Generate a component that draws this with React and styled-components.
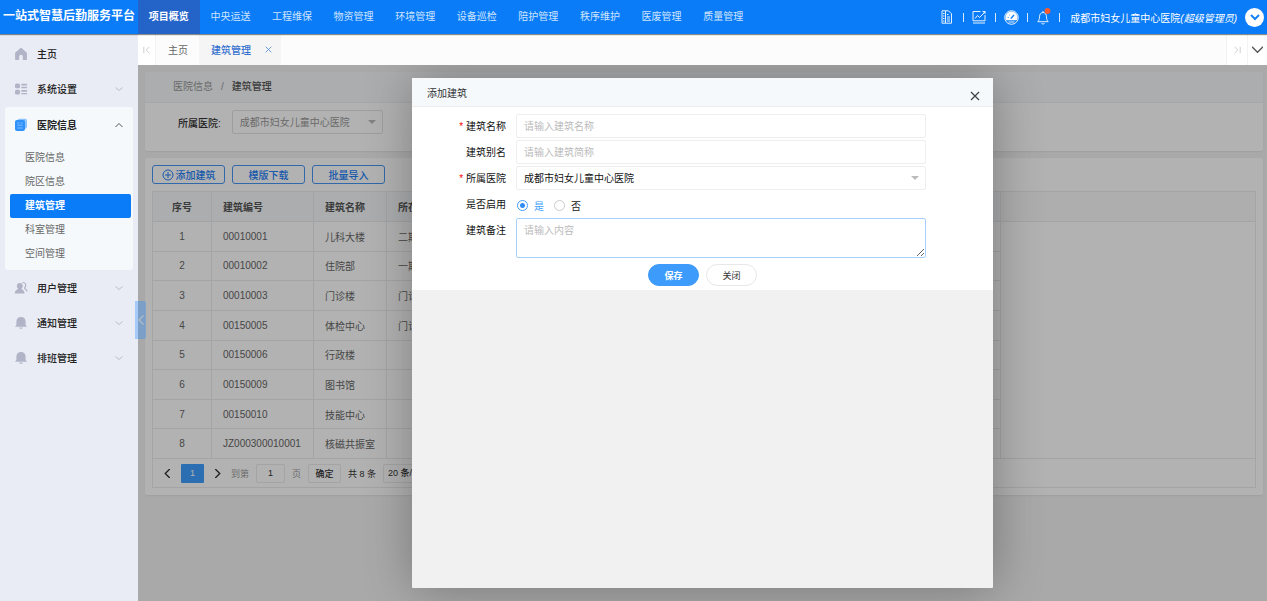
import React, { useState } from "react";
import styled, { createGlobalStyle, css } from "styled-components";

const GlobalStyle = createGlobalStyle`
  * {
    box-sizing: border-box;
  }
  body {
    margin: 0;
    overflow: hidden;
    background: #f2f2f2;
  }
  body,
  button,
  input,
  select,
  textarea {
    font-family: "Liberation Sans", "Noto Sans CJK SC", sans-serif;
    font-size: 10px;
    color: #333;
  }
  button {
    padding: 0;
    border: 0;
    background: none;
    cursor: pointer;
  }
  a {
    color: inherit;
    text-decoration: none;
  }
`;

const Page = styled.div`
  display: flex;
  flex-direction: column;
  height: 100vh;
`;

/* ---------- header ---------- */
const Header = styled.header`
  position: relative;
  z-index: 3;
  display: flex;
  flex: none;
  height: 34px;
  background: #0a7cf8;
  color: #fff;
  box-shadow: 0 1px 1px rgba(0, 0, 0, 0.45);
`;
const Logo = styled.h1`
  flex: none;
  width: 138px;
  margin: 0;
  font-size: 12px;
  font-weight: 700;
  line-height: 33px;
  text-align: center;
  white-space: nowrap;
`;
const TopNav = styled.nav`
  display: flex;
  flex: 0 1 616px;
`;
const TopLink = styled.a`
  flex: 1;
  line-height: 34px;
  text-align: center;
  white-space: nowrap;
  color: ${(p) => (p.$active ? "#fff" : "#cfe4fd")};
  font-weight: ${(p) => (p.$active ? 700 : 400)};
  background: ${(p) => (p.$active ? "#2464c9" : "transparent")};
`;
const Tools = styled.div`
  display: flex;
  align-items: center;
  margin-left: auto;
  padding-right: 3px;
  white-space: nowrap;
`;
const Tool = styled.button`
  position: relative;
  display: flex;
  align-items: center;
  justify-content: center;
  width: 32px;
  height: 33px;
  padding-right: 2px;
  color: #e6f1fe;
  &::after {
    content: "";
    position: absolute;
    right: 0;
    width: 1px;
    height: 9px;
    background: #d5e8fe;
  }
`;
const UserName = styled.span`
  margin: 0 8px 0 10px;
`;
const UserToggle = styled.button`
  display: flex;
  align-items: center;
  justify-content: center;
  width: 19px;
  height: 19px;
  border-radius: 50%;
  background: #fff;
  color: #1682f8;
`;

/* ---------- sidebar ---------- */
const Body = styled.div`
  display: flex;
  flex: 1;
  min-height: 0;
`;
const Sidebar = styled.aside`
  flex: none;
  width: 138px;
  padding-top: 2px;
  background: #eaecf5;
`;
const MenuGroup = styled.div`
  ${(p) =>
    p.$open &&
    css`
      margin: 1px 5px 0;
      border-radius: 3px;
      background: #f5f9fc;
    `}
`;
const MenuTitle = styled.button`
  display: flex;
  align-items: center;
  width: 100%;
  height: 35px;
  padding: 0 ${(p) => (p.$open ? 10 : 15)}px 0 ${(p) => (p.$open ? 9 : 14)}px;
  color: #222;
  font-weight: ${(p) => (p.$open ? 700 : 500)};
  svg:first-child {
    margin-right: 9px;
  }
`;
const MenuArrow = styled.svg`
  width: 8px;
  height: 8px;
  margin-left: auto;
  color: ${(p) => (p.$open ? "#555" : "#bcbcc4")};
`;
const SubMenu = styled.div`
  display: flex;
  flex-direction: column;
  padding: 4px 2px 4px 5px;
`;
const SubLink = styled.a`
  padding-left: 15px;
  border-radius: 2px;
  line-height: 24px;
  color: ${(p) => (p.$active ? "#fff" : "#666")};
  font-weight: ${(p) => (p.$active ? 700 : 400)};
  background: ${(p) => (p.$active ? "#0a7cf8" : "transparent")};
`;

/* ---------- tabs ---------- */
const Main = styled.main`
  position: relative;
  display: flex;
  flex: 1;
  flex-direction: column;
  min-width: 0;
`;
const TabBar = styled.div`
  display: flex;
  flex: none;
  height: 31px;
  background: #fcfcfc;
`;
const TabIcon = styled.button`
  display: flex;
  align-items: center;
  justify-content: center;
  width: ${(p) => p.$width}px;
  border-right: 1px solid #f3f3f3;
  background: #fff;
  color: ${(p) => (p.$dark ? "#555" : "#c4c4c4")};
  &:last-child {
    border-right: 0;
  }
`;
const Tab = styled.div`
  display: flex;
  align-items: center;
  padding: 0 ${(p) => (p.$active ? 9 : 11)}px 0 12px;
  color: ${(p) => (p.$active ? "#3370cf" : "#666")};
  font-weight: ${(p) => (p.$active ? 500 : 400)};
  background: ${(p) => (p.$active ? "#f5f5f5" : "transparent")};
  button {
    display: flex;
    margin-left: 14px;
    color: #5a95dc;
  }
`;
const TabSpace = styled.div`
  flex: 1;
  border-right: 1px solid #f3f3f3;
`;

/* ---------- content ---------- */
const Content = styled.section`
  position: relative;
  flex: 1;
  min-height: 0;
  padding: 7px 4px 7px 7px;
  overflow: hidden;
  background: #f2f2f2;
`;
const Panel = styled.div`
  margin-bottom: 7px;
  border-radius: 2px;
  background: #fff;
  box-shadow: 0 1px 2px rgba(0, 0, 0, 0.06);
`;
const Breadcrumb = styled.nav`
  padding: 0 28px;
  border-bottom: 1px solid #f0f0f0;
  line-height: 30px;
  color: #999;
  background: #f5f8fb;
  span {
    margin: 0 8px;
  }
  b {
    color: #555;
    font-weight: 500;
  }
`;
const Filter = styled.div`
  display: flex;
  align-items: center;
  gap: 11px;
  padding: 7px 33px 17px;
  label {
    font-weight: 500;
  }
`;
const SelectBox = styled.div`
  position: relative;
  width: ${(p) => p.$width};
  &::after {
    content: "";
    position: absolute;
    top: 50%;
    right: 7px;
    margin-top: -2px;
    border: 4px solid transparent;
    border-top-color: #bbb;
    border-bottom: 0;
    pointer-events: none;
  }
`;
const fieldStyle = css`
  display: block;
  width: 100%;
  height: 24px;
  padding: 0 7px;
  border: 1px solid #eee;
  border-radius: 2px;
  outline: none;
  background: #fff;
  &::placeholder {
    color: #bbb;
  }
`;
const Select = styled.select`
  ${fieldStyle}
  appearance: none;
  color: ${(p) => (p.$muted ? "#999" : "#111")};
  border-color: ${(p) => (p.$muted ? "#e2e2e2" : "#eee")};
`;
const TablePanel = styled(Panel)`
  padding: 7px;
`;
const Toolbar = styled.div`
  display: flex;
  gap: 7px;
  margin-bottom: 7px;
`;
const ToolbarButton = styled.button`
  display: flex;
  align-items: center;
  justify-content: center;
  gap: 2px;
  width: 73px;
  height: 19px;
  border: 1px solid #4795f2;
  border-radius: 3px;
  color: #2280f6;
  font-weight: 500;
`;
const TableFrame = styled.div`
  border: 1px solid #ebebeb;
`;
const Table = styled.table`
  width: 100%;
  height: 267px;
  table-layout: fixed;
  border-collapse: separate;
  border-spacing: 0;
  color: #666;
  th,
  td {
    padding: 0 11px;
    border-right: 1px solid #ebebeb;
    border-bottom: 1px solid #ebebeb;
    text-align: left;
    white-space: nowrap;
    overflow: hidden;
  }
  th {
    height: 30px;
    background: #f5f8fb;
    color: #555;
    font-weight: 700;
  }
  th:first-child,
  td:first-child {
    text-align: center;
  }
  th:last-child {
    background: #fafafa;
    border-right: 0;
  }
  td:last-child {
    border-right: 0;
    border-bottom: 0;
  }
  tbody tr:last-child td {
    border-bottom: 1px solid #ebebeb;
  }
`;
const Pager = styled.div`
  display: flex;
  align-items: center;
  gap: 7px;
  height: 28px;
  padding-left: 8px;
  font-size: 9px;
  color: #999;
`;
const pagerBox = css`
  height: 19px;
  border: 1px solid #ebebeb;
  border-radius: 2px;
  background: #fff;
  font-size: 9px;
  font-weight: 500;
`;
const PageArrow = styled.button`
  display: flex;
  align-items: center;
  justify-content: center;
  width: 13px;
  height: 19px;
`;
const PageCurrent = styled.button`
  width: 23px;
  height: 19px;
  border-radius: 1px;
  background: #409eff;
  color: #fff;
  font-size: 9px;
`;
const PageInput = styled.input`
  ${pagerBox}
  width: 29px;
  text-align: center;
`;
const PageButton = styled.button`
  ${pagerBox}
  width: 33px;
`;
const PageTotal = styled.span`
  color: #333;
`;
const PageSelect = styled.select`
  ${pagerBox}
  appearance: none;
  width: 60px;
  padding: 0 4px;
`;
const Handle = styled.button`
  position: absolute;
  z-index: 4;
  top: 267px;
  left: -3px;
  display: flex;
  align-items: center;
  justify-content: center;
  width: 11px;
  height: 38px;
  border-radius: 0 2px 2px 0;
  background: rgba(40, 140, 255, 0.35);
  color: #b4bcc6;
`;

/* ---------- dialog ---------- */
const Overlay = styled.div`
  position: absolute;
  inset: 0;
  display: flex;
  align-items: center;
  justify-content: center;
  background: rgba(0, 0, 0, 0.3);
`;
const Dialog = styled.div`
  display: flex;
  flex-direction: column;
  width: 581px;
  max-width: 95%;
  height: 95%;
  border-radius: 1px;
  background: #f1f1f1;
  box-shadow: 1px 1px 50px rgba(0, 0, 0, 0.3);
`;
const DialogHeader = styled.div`
  display: flex;
  align-items: center;
  justify-content: space-between;
  height: 29px;
  padding: 0 13px 0 15px;
  border-bottom: 1px solid #eee;
  background: #f5f9fc;
  h2 {
    margin: 0;
    font-size: 10px;
    font-weight: 400;
  }
  button {
    display: flex;
    padding-top: 7px;
    color: #444;
  }
`;
const DialogForm = styled.form`
  display: flex;
  flex-direction: column;
  gap: 2px;
  padding: 7px 67px 4px 15px;
  background: #fff;
`;
const FormRow = styled.div`
  display: grid;
  grid-template-columns: 79px 1fr;
  column-gap: 10px;
`;
const FormLabel = styled.label`
  height: 24px;
  padding-top: 1px;
  line-height: 24px;
  text-align: right;
  color: #111;
  &::before {
    content: "${(p) => (p.$required ? "* " : "")}";
    color: #f00;
  }
`;
const Input = styled.input`
  ${fieldStyle}
`;
const TextArea = styled.textarea`
  ${fieldStyle}
  height: 40px;
  padding: 3px 7px;
  border-color: #a6cffa;
  resize: vertical;
`;
const Radios = styled.div`
  display: flex;
  align-items: center;
  gap: 10px;
  padding: 2px 1px 0;
`;
const RadioLabel = styled.label`
  display: flex;
  align-items: center;
  gap: 6px;
  color: ${(p) => (p.$checked ? "#409eff" : "#222")};
`;
const Radio = styled.input`
  appearance: none;
  width: 11px;
  height: 11px;
  margin: 0;
  border: 1px solid #ccc;
  border-radius: 50%;
  &:checked {
    border-color: #409eff;
    background: radial-gradient(#2f8cf5 0 2px, #fff 3px);
  }
`;
const Actions = styled.div`
  display: flex;
  justify-content: center;
  gap: 7px;
  margin: 4px 0 0 52px;
`;
const ActionButton = styled.button`
  width: 51px;
  height: 22px;
  border: 1px solid ${(p) => (p.$primary ? "#3d9cfb" : "#e8e8e8")};
  border-radius: 11px;
  background: ${(p) => (p.$primary ? "#3d9cfb" : "#fff")};
  color: ${(p) => (p.$primary ? "#fff" : "#333")};
  font-size: 9px;
  font-weight: ${(p) => (p.$primary ? 700 : 400)};
`;

/* ---------- icons ---------- */
const Line = ({ w = 10, h = 10, d, sw = 1, box = "0 0 10 10" }) => (
  <svg
    width={w}
    height={h}
    viewBox={box}
    fill="none"
    stroke="currentColor"
    strokeWidth={sw}
  >
    <path d={d} />
  </svg>
);

const menuIcons = {
  home: (
    <path
      d="M7 1.500 1.800 6v6.200h2.700V9.500a2.500 2.500 0 0 1 5 0v2.700h2.700V6Z"
      stroke="#b0b4c6"
      strokeWidth="1.400"
      strokeLinejoin="round"
    />
  ),
  list: (
    <>
      <rect x="1" y="1.500" width="5" height="4.800" rx="1.500" />
      <rect x="1" y="7.700" width="5" height="4.800" rx="1.500" />
      <rect x="7.200" y="1.800" width="6" height="1.700" rx=".6" />
      <rect x="7.200" y="4.800" width="6" height="1.400" rx=".6" />
      <rect x="7.200" y="8" width="6" height="1.700" rx=".6" />
      <rect x="7.200" y="10.900" width="6" height="1.400" rx=".6" />
    </>
  ),
  book: (
    <>
      <rect x="3.500" y=".8" width="9.500" height="10" rx="2" fill="#8dc4fc" />
      <rect x="1" y="2" width="10" height="11" rx="2" fill="#2f92fb" />
      <path
        d="M3.200 5h2M6.500 5h2M3.200 7.200h5.500M3.200 10h5.500"
        stroke="#7dbcfc"
        strokeWidth="1"
      />
    </>
  ),
  user: (
    <>
      <path d="M5.800 2a2.900 2.900 0 0 1 2.900 3c0 1.300-.6 2.200-1.200 2.800.3.900 3 1.200 3 4.700H.8c0-3.500 2.900-3.800 3.300-4.700C3.500 7.200 2.900 6.300 2.900 5A2.900 2.900 0 0 1 5.800 2Z" />
      <path
        d="M8.500 1.500c2.300 0 3.200 1.400 3.200 3 0 1.200-.6 2-1.200 2.600.2.900 2.200 1.300 2.500 3.400"
        fill="none"
        stroke="#b0b4c6"
        strokeWidth="1.200"
      />
    </>
  ),
  bell: (
    <>
      <path d="M7 1c2.900 0 4.600 2 4.600 4.500v3.500l1.400 1.700H1l1.400-1.700V5.500C2.400 3 4.100 1 7 1Z" />
      <path d="M5.200 11.400h3.600c-.2 1-.8 1.400-1.800 1.400s-1.600-.4-1.800-1.400Z" />
    </>
  ),
};

const MenuIcon = ({ name }) => (
  <svg width="14" height="14" viewBox="0 0 14 14" fill="#b0b4c6">
    {menuIcons[name]}
  </svg>
);

const ReportIcon = () => (
  <svg width="12" height="14" viewBox="0 0 12 14" fill="none" stroke="currentColor">
    <path d="M1 .8h6.500l3 3v9.400H1ZM4.500 1v12" />
    <path d="M2 3.500h1.500M2 6h1.500M2 8.500h1.500M2 11h1.500M6 4.500h1.500M6 7h3M6 9h3M6 11h3" />
  </svg>
);
const ChartIcon = () => (
  <svg width="14" height="14" viewBox="0 0 14 14" fill="none" stroke="currentColor">
    <path d="M8.500 1.500H1v9.300h12V5M1 13h12M3 8.500l2.500-3 2 2 4.500-4.500" />
    <path d="M10 1h3.500v3.200Z" fill="currentColor" stroke="none" />
  </svg>
);
const GaugeIcon = () => (
  <svg width="15" height="15" viewBox="0 0 15 15" fill="none" stroke="currentColor">
    <circle cx="7.500" cy="7.500" r="6.800" />
    <path
      d="M7.500 1.500a6 6 0 0 0-5.300 8.800h10.600A6 6 0 0 0 7.500 1.500Z"
      fill="#fff"
      stroke="none"
    />
    <path d="M6.800 8.600 10 5" stroke="#0a7cf8" strokeWidth="1.400" />
    <path d="M3.800 7.500h1M5.200 4.800l.6.600" stroke="#0a7cf8" strokeWidth=".8" />
    <path d="M4.500 12h6" />
  </svg>
);
const BellIcon = () => (
  <svg width="15" height="18" viewBox="0 0 15 18" fill="none" stroke="currentColor">
    <path d="M7 4.500c-2.500.3-3.500 2-3.500 4.300 0 2.500-.6 3.700-1.700 4.900h10.400c-1.100-1.200-1.700-2.400-1.700-4.900 0-2.300-1-4-3.500-4.300Z" />
    <path d="M7 3v1.500M5.500 15.500q1.500 1.200 3 0" />
    <circle cx="11.500" cy="3" r="2.900" fill="#fb5a2c" stroke="none" />
  </svg>
);
const PlusCircle = () => (
  <Line w={12} h={12} box="0 0 12 12" d="M6 1a5 5 0 1 0 0 10A5 5 0 1 0 6 1M6 3v6M3 6h6" />
);

const topLinks = [
  "项目概览",
  "中央运送",
  "工程维保",
  "物资管理",
  "环境管理",
  "设备巡检",
  "陪护管理",
  "秩序维护",
  "医废管理",
  "质量管理",
];

const menus = [
  { title: "主页", icon: "home", leaf: true },
  { title: "系统设置", icon: "list" },
  {
    title: "医院信息",
    icon: "book",
    children: ["医院信息", "院区信息", "建筑管理", "科室管理", "空间管理"],
  },
  { title: "用户管理", icon: "user" },
  { title: "通知管理", icon: "bell" },
  { title: "排班管理", icon: "bell" },
];

const buildings = [
  ["00010001", "儿科大楼", "二期"],
  ["00010002", "住院部", "一期"],
  ["00010003", "门诊楼", "门诊"],
  ["00150005", "体检中心", "门诊"],
  ["00150006", "行政楼", ""],
  ["00150009", "图书馆", ""],
  ["00150010", "技能中心", ""],
  ["JZ000300010001", "核磁共振室", ""],
];

const hospital = "成都市妇女儿童中心医院";

function AddDialog() {
  const [form, setForm] = useState({
    name: "",
    alias: "",
    enabled: true,
    remark: "",
  });

  return (
    <Overlay>
      <Dialog role="dialog" aria-labelledby="dialog-title">
        <DialogHeader>
          <h2 id="dialog-title">添加建筑</h2>
          <button type="button">
            <Line sw={1.3} d="M1 1l8 8M9 1L1 9" />
          </button>
        </DialogHeader>
        <DialogForm onSubmit={(e) => e.preventDefault()}>
          <FormRow>
            <FormLabel htmlFor="name" $required>
              建筑名称
            </FormLabel>
            <Input
              id="name"
              placeholder="请输入建筑名称"
              value={form.name}
              onChange={(e) => setForm({ ...form, name: e.target.value })}
            />
          </FormRow>
          <FormRow>
            <FormLabel htmlFor="alias">建筑别名</FormLabel>
            <Input
              id="alias"
              placeholder="请输入建筑简称"
              value={form.alias}
              onChange={(e) => setForm({ ...form, alias: e.target.value })}
            />
          </FormRow>
          <FormRow>
            <FormLabel htmlFor="hospital" $required>
              所属医院
            </FormLabel>
            <SelectBox $width="100%">
              <Select id="hospital">
                <option>{hospital}</option>
              </Select>
            </SelectBox>
          </FormRow>
          <FormRow>
            <FormLabel as="div" id="enabled-label">
              是否启用
            </FormLabel>
            <Radios role="radiogroup" aria-labelledby="enabled-label">
              <RadioLabel $checked={form.enabled}>
                <Radio
                  type="radio"
                  name="enabled"
                  checked={form.enabled}
                  onChange={() => setForm({ ...form, enabled: true })}
                />
                是
              </RadioLabel>
              <RadioLabel $checked={!form.enabled}>
                <Radio
                  type="radio"
                  name="enabled"
                  checked={!form.enabled}
                  onChange={() => setForm({ ...form, enabled: false })}
                />
                否
              </RadioLabel>
            </Radios>
          </FormRow>
          <FormRow>
            <FormLabel htmlFor="remark">建筑备注</FormLabel>
            <TextArea
              id="remark"
              placeholder="请输入内容"
              value={form.remark}
              onChange={(e) => setForm({ ...form, remark: e.target.value })}
            />
          </FormRow>
          <Actions>
            <ActionButton type="submit" $primary>
              保存
            </ActionButton>
            <ActionButton type="button">关闭</ActionButton>
          </Actions>
        </DialogForm>
      </Dialog>
    </Overlay>
  );
}

function App() {
  return (
    <Page>
      <GlobalStyle />
      <Header>
        <Logo>一站式智慧后勤服务平台</Logo>
        <TopNav>
          {topLinks.map((text, i) => (
            <TopLink href="#" key={text} $active={i === 0}>
              {text}
            </TopLink>
          ))}
        </TopNav>
        <Tools>
          <Tool>
            <ReportIcon />
          </Tool>
          <Tool>
            <ChartIcon />
          </Tool>
          <Tool>
            <GaugeIcon />
          </Tool>
          <Tool>
            <BellIcon />
          </Tool>
          <UserName>
            {hospital}
            <em>(超级管理员)</em>
          </UserName>
          <UserToggle>
            <Line sw={2} d="M1 3l4 4 4-4" />
          </UserToggle>
        </Tools>
      </Header>
      <Body>
        <Sidebar>
          {menus.map((m) => (
            <MenuGroup key={m.title} $open={!!m.children}>
              <MenuTitle $open={!!m.children}>
                <MenuIcon name={m.icon} />
                {m.title}
                {!m.leaf && (
                  <MenuArrow
                    $open={!!m.children}
                    viewBox="0 0 8 8"
                    fill="none"
                    stroke="currentColor"
                  >
                    <path d={m.children ? "M.5 6 4 2.500 7.500 6" : "M.5 2.500 4 5.500 7.500 2.500"} />
                  </MenuArrow>
                )}
              </MenuTitle>
              {m.children && (
                <SubMenu>
                  {m.children.map((text) => (
                    <SubLink href="#" key={text} $active={text === "建筑管理"}>
                      {text}
                    </SubLink>
                  ))}
                </SubMenu>
              )}
            </MenuGroup>
          ))}
        </Sidebar>
        <Main>
          <TabBar>
            <TabIcon $width={18}>
              <Line w={8} h={8} d="M1 1v8M8 1L4 5l4 4" />
            </TabIcon>
            <Tab>主页</Tab>
            <Tab $active>
              建筑管理
              <button>
                <Line w={7} h={7} sw={1.3} d="M1 1l8 8M9 1L1 9" />
              </button>
            </Tab>
            <TabSpace />
            <TabIcon $width={21}>
              <Line w={8} h={8} d="M9 1v8M2 1l4 4-4 4" />
            </TabIcon>
            <TabIcon $width={19} $dark>
              <Line w={11} h={11} sw={1.2} d="M0 2.500l5 5 5-5" />
            </TabIcon>
          </TabBar>
          <Content>
            <Panel>
              <Breadcrumb>
                医院信息<span>/</span>
                <b>建筑管理</b>
              </Breadcrumb>
              <Filter>
                <label htmlFor="filter-hospital">所属医院:</label>
                <SelectBox $width="151px">
                  <Select id="filter-hospital" $muted>
                    <option>{hospital}</option>
                  </Select>
                </SelectBox>
              </Filter>
            </Panel>
            <TablePanel>
              <Toolbar>
                <ToolbarButton>
                  <PlusCircle />
                  添加建筑
                </ToolbarButton>
                <ToolbarButton>模版下载</ToolbarButton>
                <ToolbarButton>批量导入</ToolbarButton>
              </Toolbar>
              <TableFrame>
                <Table>
                  <colgroup>
                    <col width="59" />
                    <col width="102" />
                    <col width="73" />
                    <col width="614" />
                    <col />
                  </colgroup>
                  <thead>
                    <tr>
                      <th>序号</th>
                      <th>建筑编号</th>
                      <th>建筑名称</th>
                      <th>所在</th>
                      <th />
                    </tr>
                  </thead>
                  <tbody>
                    {buildings.map(([code, name, area], i) => (
                      <tr key={code}>
                        <td>{i + 1}</td>
                        <td>{code}</td>
                        <td>{name}</td>
                        <td>{area}</td>
                        <td />
                      </tr>
                    ))}
                  </tbody>
                </Table>
                <Pager>
                  <PageArrow>
                    <Line w={9} h={9} sw={1.5} d="M7.500 0l-5 5 5 5" />
                  </PageArrow>
                  <PageCurrent>1</PageCurrent>
                  <PageArrow>
                    <Line w={9} h={9} sw={1.5} d="M2.500 0l5 5-5 5" />
                  </PageArrow>
                  <label htmlFor="page">到第</label>
                  <PageInput id="page" defaultValue="1" />
                  页
                  <PageButton>确定</PageButton>
                  <PageTotal>共 8 条</PageTotal>
                  <PageSelect aria-label="每页条数">
                    <option>20 条/页</option>
                  </PageSelect>
                </Pager>
              </TableFrame>
            </TablePanel>
            <AddDialog />
          </Content>
          <Handle>
            <Line w={8} h={12} sw={1.2} box="0 0 8 12" d="M6.500 1.500 2 6l4.500 4.500" />
          </Handle>
        </Main>
      </Body>
    </Page>
  );
}

export default App;
